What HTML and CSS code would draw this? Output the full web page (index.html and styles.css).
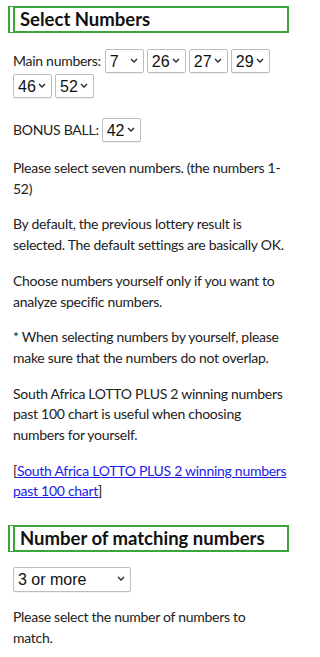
FILE: index.html
```html
<!DOCTYPE html>
<html lang="en">
<head>
<meta charset="utf-8">
<title>Select Numbers</title>
<link rel="stylesheet" href="styles.css">
</head>
<body>
<h2 class="sec-title sec-first">Select Numbers</h2>
<div class="content">
  <div class="main-row">
    <span class="label">Main numbers:</span>
    <span class="sel"><select class="num"><option>7</option><option>52</option></select><svg class="chev" viewBox="0 0 8 5" width="8" height="5"><path d="M1 1 L4 4 L7 1" fill="none" stroke="#222" stroke-width="1.3"/></svg></span>
    <span class="sel"><select class="num"><option>26</option><option>52</option></select><svg class="chev" viewBox="0 0 8 5" width="8" height="5"><path d="M1 1 L4 4 L7 1" fill="none" stroke="#222" stroke-width="1.3"/></svg></span>
    <span class="sel"><select class="num"><option>27</option><option>52</option></select><svg class="chev" viewBox="0 0 8 5" width="8" height="5"><path d="M1 1 L4 4 L7 1" fill="none" stroke="#222" stroke-width="1.3"/></svg></span>
    <span class="sel"><select class="num"><option>29</option><option>52</option></select><svg class="chev" viewBox="0 0 8 5" width="8" height="5"><path d="M1 1 L4 4 L7 1" fill="none" stroke="#222" stroke-width="1.3"/></svg></span>
    <span class="sel"><select class="num"><option>46</option><option>52</option></select><svg class="chev" viewBox="0 0 8 5" width="8" height="5"><path d="M1 1 L4 4 L7 1" fill="none" stroke="#222" stroke-width="1.3"/></svg></span>
    <span class="sel"><select class="num"><option>52</option></select><svg class="chev" viewBox="0 0 8 5" width="8" height="5"><path d="M1 1 L4 4 L7 1" fill="none" stroke="#222" stroke-width="1.3"/></svg></span>
  </div>
  <div class="bonus-row">
    <span class="label">BONUS BALL:</span>
    <span class="sel"><select class="num"><option>42</option><option>52</option></select><svg class="chev" viewBox="0 0 8 5" width="8" height="5"><path d="M1 1 L4 4 L7 1" fill="none" stroke="#222" stroke-width="1.3"/></svg></span>
  </div>
  <p class="txt">Please select seven numbers. (the numbers 1-52)</p>
  <p class="txt">By default, the previous lottery result is selected. The default settings are basically OK.</p>
  <p class="txt">Choose numbers yourself only if you want to analyze specific numbers.</p>
  <p class="txt">* When selecting numbers by yourself, please make sure that the numbers do not overlap.</p>
  <p class="txt">South Africa LOTTO PLUS 2 winning numbers past 100 chart is useful when choosing numbers for yourself.</p>
  <p class="txt last">[<a href="#" class="link">South Africa LOTTO PLUS 2 winning numbers past 100 chart</a>]</p>
</div>
<h2 class="sec-title sec-second">Number of matching numbers</h2>
<div class="content">
  <div class="match-row">
    <span class="sel"><select class="match"><option>3 or more</option><option>4 or more</option><option>5 or more</option><option>6 or more</option></select><svg class="chev" viewBox="0 0 8 5" width="8" height="5"><path d="M1 1 L4 4 L7 1" fill="none" stroke="#222" stroke-width="1.3"/></svg></span>
  </div>
  <p class="txt">Please select the number of numbers to match.</p>
</div>
</body>
</html>
```
FILE: styles.css
```css
html, body {
  background: #fff;
}
body {
  margin: 0;
  padding: 6px 8px 0 8px;
  width: 281px;
  font-family: Lato, "Noto Sans", sans-serif;
  font-size: 14px;
  letter-spacing: -0.28px;
  line-height: 20.7px;
  color: #222;
}
.content {
  padding-left: 5px;
  width: 274px;
}
.sec-title {
  margin: 0;
  border: 2px solid #3aa53a;
  border-left: 7px double #3aa53a;
  padding: 0 0 0 5px;
  font-size: 18.5px;
  line-height: 23px;
  font-weight: 700;
  letter-spacing: 0;
  color: #111;
}
.sec-first {
  margin-bottom: 16px;
}
.sec-second {
  margin-top: 23px;
  margin-bottom: 15px;
}
.main-row {
  display: flex;
  flex-wrap: wrap;
  align-items: center;
  column-gap: 3px;
  row-gap: 1px;
  margin-bottom: 20px;
}
.label {
  margin-right: 1px;
}
.bonus-row {
  display: flex;
  align-items: center;
  column-gap: 2px;
  margin-bottom: 16px;
}
.sel {
  position: relative;
  display: inline-flex;
}
.chev {
  position: absolute;
  right: 6px;
  top: 9px;
  pointer-events: none;
}
.num, .match {
  appearance: none;
  -webkit-appearance: none;
  font-family: "Liberation Sans", Arial, sans-serif;
  font-size: 16px;
  letter-spacing: 0;
  height: 24px;
  margin: 0;
  color: #111;
  background: #fff;
  border: 1px solid #bdbdbd;
  border-radius: 2px;
  padding: 0 14px 0 4px;
  box-shadow: 0 1px 0 rgba(0,0,0,0.06);
}
.num {
  width: 39px;
}
.match {
  width: 118px;
  height: 25px;
}
.match-row {
  display: flex;
  margin-bottom: 15px;
}
.txt {
  margin: 0 0 15px 0;
}
.txt.last {
  margin-bottom: 0;
}
.link {
  color: #1c1ce6;
  text-decoration: underline;
}
```
